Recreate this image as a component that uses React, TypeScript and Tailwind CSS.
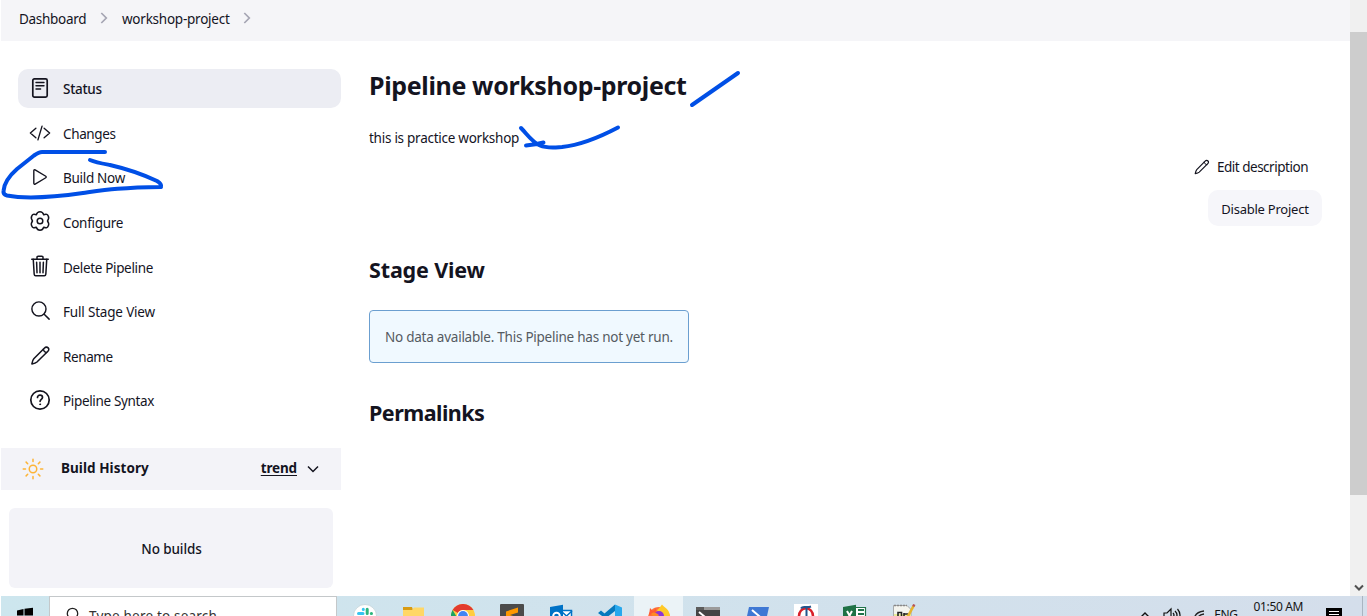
import type { ReactNode } from "react";
import {
  IoCodeSlashOutline,
  IoPlayOutline,
  IoSearchOutline,
  IoSunnyOutline,
  IoTrashOutline,
} from "react-icons/io5";

const DocumentIcon = () => (
  <svg viewBox="0 0 24 24" className="size-6" fill="none" stroke="currentColor" strokeWidth="1.7" strokeLinecap="round">
    <rect x="4.8" y="2.8" width="14.4" height="18.4" rx="1.6" />
    <path strokeWidth="1.4" d="M8 6.5h8M8 9.8h8M8 13h4.6" />
  </svg>
);

const GearIcon = () => (
  <svg viewBox="0 0 24 24" className="size-6" fill="none" stroke="currentColor" strokeWidth="1.5" strokeLinejoin="round">
    <path d="M15.700 5.700C18.500 4.600 19.600 5.400 20.300 7.200C21.300 9 21 9.800 19.500 12C21 14.200 21.300 15 20.300 16.800C19.600 18.600 18.500 19.400 15.700 18.300C14.900 20.800 14 21.300 12 21.300S9.100 20.800 8.300 18.300C5.500 19.400 4.400 18.600 3.700 16.800C2.700 15 3 14.200 4.500 12C3 9.800 2.700 9 3.700 7.200C4.400 5.400 5.500 4.600 8.300 5.700C9.100 3.200 10 2.700 12 2.700S14.900 3.200 15.700 5.700Z" />
    <circle cx="12" cy="12" r="2.800" />
  </svg>
);

const PencilIcon = ({ className }: { className: string }) => (
  <svg viewBox="0 0 24 24" className={className} fill="none" stroke="currentColor" strokeWidth="1.6" strokeLinejoin="round" strokeLinecap="round">
    <path d="M16.2 4.1 5 15.4c-.9 1-1.6 3.2-2 5.4 2.2-.4 4.300-1.100 5.300-2L19.700 7.500c1.100-1.100 1.300-2.500.3-3.500s-2.700-1-3.800.1Z" />
    <path strokeWidth="1.300" d="M15 5.400c.2 2 1.500 3.300 3.500 3.500" />
  </svg>
);

const HelpIcon = () => (
  <svg viewBox="0 0 24 24" className="size-6" fill="none" stroke="currentColor" strokeWidth="1.7" strokeLinecap="round">
    <circle cx="12" cy="12" r="9.2" />
    <path d="M9.500 9.500c0-1.500 1.100-2.300 2.500-2.300s2.500.9 2.500 2.200c0 1.900-2.400 1.900-2.400 3.900" />
    <circle cx="12.100" cy="16.300" r=".5" fill="currentColor" strokeWidth="1" />
  </svg>
);

const Crumb = () => (
  <svg viewBox="0 0 8 12" className="-mt-px h-3 w-2" fill="none" stroke="#a5a5b3" strokeWidth="1.700">
    <path d="m1.300 1 5 5-5 5" />
  </svg>
);

const items: { label: string; icon: ReactNode; cls: string }[] = [
  { label: "Status", icon: <DocumentIcon />, cls: "bg-[#ecedf3] font-medium tracking-[-0.28px]" },
  { label: "Changes", icon: <IoCodeSlashOutline className="mt-px size-[22px]" />, cls: "tracking-[-0.36px]" },
  { label: "Build Now", icon: <IoPlayOutline className="size-[22px]" />, cls: "tracking-[-0.3px]" },
  { label: "Configure", icon: <GearIcon />, cls: "tracking-[-0.3px]" },
  { label: "Delete Pipeline", icon: <IoTrashOutline className="size-6" />, cls: "tracking-[-0.34px]" },
  { label: "Full Stage View", icon: <IoSearchOutline className="size-[23px]" />, cls: "tracking-[-0.18px]" },
  { label: "Rename", icon: <PencilIcon className="size-[23px]" />, cls: "tracking-[-0.4px]" },
  { label: "Pipeline Syntax", icon: <HelpIcon />, cls: "tracking-[-0.34px]" },
];

function Sidebar() {
  return (
    <aside className="w-[340px] shrink-0 pt-7">
      <nav className="flex flex-col gap-[5.650px] pl-[17px]">
        {items.map((it) => (
          <a key={it.label} className={`flex h-[39px] items-center gap-[11px] rounded-[10px] pl-[10px] ${it.cls}`}>
            <span className="-mt-[2px] flex size-6 items-center justify-center">{it.icon}</span>
            <span className="mt-px leading-5">{it.label}</span>
          </a>
        ))}
      </nav>
      <div className="mt-[27.450px] flex h-[42px] items-center bg-[#f3f3f8] pr-[22px] pl-5 font-bold">
        <IoSunnyOutline className="size-6 text-[#fdb436]" />
        <span className="-mt-[2px] ml-4 tracking-[0.06px]">Build History</span>
        <a className="-mt-[2px] ml-auto tracking-[-0.15px] underline underline-offset-2">trend</a>
        <svg viewBox="0 0 12 8" className="ml-[10px] h-2 w-3" fill="none" stroke="currentColor" strokeWidth="1.500">
          <path d="m1 1.500 5 5 5-5" />
        </svg>
      </div>
      <div className="mt-[18px] mr-2 ml-2 flex h-20 items-center justify-center rounded-md bg-[#f3f3f8] font-medium tracking-[-0.1px]">
        <span className="mt-[2px] ml-px">No builds</span>
      </div>
    </aside>
  );
}

function Main() {
  return (
    <main className="flex min-w-0 flex-1 flex-col items-start pl-7">
      <h1 className="mt-[27px] text-[25px] leading-[34px] font-bold tracking-[-0.360px]">Pipeline workshop-project</h1>
      <p className="mt-[26px] leading-5 tracking-[-0.260px]">this is practice workshop</p>
      <div className="mt-[9px] mr-7 flex flex-col items-end self-end">
        <a className="mr-[14px] flex h-5 items-center gap-[6px] tracking-[-0.48px]">
          <PencilIcon className="size-[18px]" />
          <span className="mt-px">Edit description</span>
        </a>
        <button className="mt-[13px] h-[36px] w-[114px] rounded-[10px] bg-[#f6f6fa] pt-[3px] text-[13px] tracking-[-0.240px]">Disable Project</button>
      </div>
      <h2 className="mt-[29px] text-[21.500px] leading-[30px] font-bold tracking-[-0.150px]">Stage View</h2>
      <div className="mt-[25px] flex h-[53px] w-[320px] items-center rounded border border-[#6b9fd0] bg-[#f0f9ff] pt-[2px] pl-[15px] tracking-[-0.240px] whitespace-nowrap text-[#555b62]">
        No data available. This Pipeline has not yet run.
      </div>
      <h2 className="mt-[35px] text-[21.500px] leading-[30px] font-bold tracking-[-0.520px]">Permalinks</h2>
    </main>
  );
}

const AppIcon = ({ children, active }: { children: ReactNode; active?: boolean }) => (
  <div className={`flex h-10 w-[49px] shrink-0 justify-center pt-2 ${active ? "bg-[#ebf3f7]" : ""}`}>
    <svg viewBox="0 0 24 24" className="size-6">{children}</svg>
  </div>
);

function Taskbar() {
  return (
    <footer className="ml-px flex h-5 shrink-0 items-start overflow-hidden bg-linear-to-r from-[#cde6ee] to-[#d4deeb]">
      <div className="flex h-10 w-12 shrink-0 justify-center pt-[11px]">
        <svg viewBox="0 0 18 18" className="size-[18px]">
          <path d="M1 3.500 7.500 2v6.500H1zM8.500 1.800 17 .8v7.700H8.500zM1 9.500h6.500V16L1 15zM8.500 9.500H17V17l-8.500-1z" />
        </svg>
      </div>
      <div className="flex h-10 w-[288px] shrink-0 gap-[11px] border border-[#c4c8ca] bg-white pl-4 text-[13.500px] text-[#333]">
        <svg viewBox="0 0 16 18" className="mt-[10px] h-[18px] w-4 shrink-0" fill="none" stroke="#222" strokeWidth="1.300">
          <circle cx="6.500" cy="6.500" r="5.200" />
          <path d="m3.500 11-3 4" />
        </svg>
        <span className="mt-[9px] -ml-[4px] leading-5 tracking-[0.2px]">Type here to search</span>
      </div>
      <div className="ml-[3px] flex">
        <AppIcon>
          <circle cx="12" cy="12" r="11.500" fill="#fff" stroke="#b7c9cf" strokeWidth=".6" />
          <path stroke="#36c5f0" strokeWidth="3" strokeLinecap="round" d="M5.500 9.500h4.500M10.300 5.300v.3" />
          <path stroke="#2eb67d" strokeWidth="3" strokeLinecap="round" d="M14.200 5.300v4.200M18.300 9.500h.2" />
          <path stroke="#e01e5a" strokeWidth="3" strokeLinecap="round" d="M10 14v4" />
          <path stroke="#ecb22e" strokeWidth="3" strokeLinecap="round" d="M14 14h4" />
        </AppIcon>
        <AppIcon>
          <path fill="#d99b12" d="M1 3h9l1 3H1z" />
          <path fill="#ffd766" d="M1 6h9l2-2.500h10V21H1z" />
        </AppIcon>
        <AppIcon>
          <circle cx="12" cy="12" r="12" fill="#ffcd40" />
          <path fill="#e33b2e" d="M1.600 6A12 12 0 0 1 22.400 6H12a6 6 0 0 0-5 3z" />
          <path fill="#1da362" d="M1.600 6 7 15l5 3-2 6A12 12 0 0 1 1.600 6" />
          <circle cx="12" cy="12" r="6" fill="#fff" />
          <circle cx="12" cy="12" r="4.900" fill="#4285f4" />
        </AppIcon>
        <AppIcon>
          <rect width="24" height="24" rx="1" fill="#4b4b4b" />
          <path fill="#ff9800" d="m6 7.500 12-4v5L10 11l8 2.500v5l-12 3v-4.500l7-2.500-7-2.500z" />
        </AppIcon>
        <AppIcon>
          <path fill="#fff" stroke="#0072c6" strokeWidth="1.500" d="M12 6.500h10.500V19H12z" />
          <path fill="none" stroke="#0072c6" strokeWidth="1.500" d="m12 7 5.500 5L23 7" />
          <path fill="#0072c6" d="M1 3 14 .8v22.400L1 21z" />
          <circle cx="7.500" cy="12" r="3.300" fill="none" stroke="#fff" strokeWidth="2" />
        </AppIcon>
        <AppIcon>
          <path fill="#0879bd" d="m0 9 3-2.500L19 20v3zM0 15 17 .5V7L3 18z" />
          <path fill="#28a8ed" d="m17 .5 7 3v17l-7 3z" />
        </AppIcon>
        <AppIcon active>
          <circle cx="12" cy="14" r="11" fill="#ff7139" />
          <path fill="#ffc928" d="M10 6c2-1 3-3 5-5.500 2 3 7 4 8 11v5L13 12z" />
          <path fill="#ff5a36" d="M2 11 3 4l3 3 3-3v5z" />
          <circle cx="12" cy="12" r="5" fill="#8c35d6" />
          <path fill="#ff8a25" d="M4 10c3-3 5-1 8 1l-3 4z" />
        </AppIcon>
        <AppIcon>
          <path fill="#444" d="M0 3h24v20H0z" />
          <path fill="#9b9b9b" d="M0 3h24v3H0z" />
          <path fill="#5c5c5c" d="M0 3h8v3H0z" />
          <path stroke="#fff" strokeWidth="2" fill="none" d="m3 8 6 5-6 5" />
        </AppIcon>
        <AppIcon>
          <path fill="#3f78d4" d="M4 3h20l-4 18H0z" />
          <path stroke="#fff" strokeWidth="2" fill="none" d="m7 6 7 6-9 6" />
        </AppIcon>
        <AppIcon>
          <path fill="#fff" d="M0 0h24v24H0z" />
          <ellipse cx="12" cy="12" rx="7" ry="7.800" fill="none" stroke="#d8202a" strokeWidth="2.500" />
          <path stroke="#23558c" strokeWidth="2" fill="none" d="M7 4.500c2-3.500 5 0 10-2M12.500 3v17" />
        </AppIcon>
        <AppIcon>
          <path fill="#fff" stroke="#21734a" strokeWidth="1.200" d="M12 3.500h10.500V20H12z" />
          <path stroke="#21734a" strokeWidth="2" d="M15 6h6M15 10h6M15 14h6" />
          <path fill="#1f7246" d="M0 3 13 .8v22.400L0 21z" />
          <path stroke="#fff" strokeWidth="2" d="m4 7 5 9M9 7l-5 9" />
        </AppIcon>
        <AppIcon>
          <path fill="#f4f4ee" stroke="#999" strokeWidth=".8" d="M1.500 1.500H15l4 4V22H1.500z" />
          <path fill="#e9ec9a" d="M2 10h17v6H2z" />
          <path stroke="#888" strokeDasharray="2 1" strokeWidth="1.300" d="M2 1.500h13" />
          <path stroke="#222" strokeWidth="1.600" fill="none" d="M6 16V8.500h3.500V16M12 9v7m0-6h4" />
          <path stroke="#e6b52e" strokeWidth="2.600" d="m21.500 2-7 13" />
          <path stroke="#b6545a" strokeWidth="2.600" d="m22.300.5-1 2" />
        </AppIcon>
      </div>
      <div className="ml-auto flex h-10 text-[12px] leading-4 text-[#151515]">
        <svg viewBox="0 0 10 8" className="mt-[15px] mr-[13px] h-2 w-[10px]" fill="none" stroke="#111" strokeWidth="1.400">
          <path d="m1 6 4-4 4 4" />
        </svg>
        <svg viewBox="0 0 18 16" className="mt-[11px] mr-[11px] h-4 w-[18px]" fill="none" stroke="#111" strokeWidth="1.200">
          <path d="M1 6h3l4-4v12l-4-4H1zM10 6q2 2 0 4M12 4q4 4 0 8M14.500 2q5 6 0 12" />
        </svg>
        <svg viewBox="0 0 14 14" className="mt-[13px] mr-[8px] size-[14px]" fill="none" stroke="#222" strokeWidth="1.300">
          <path d="M2 12Q2 3 12 2M5 12Q5 6 12 5M8 12Q8 9 12 8" />
        </svg>
        <span className="mt-[11px] mr-[17px] tracking-[-0.4px]">ENG</span>
        <span className="mt-[3px] mr-[23px] -ml-px tracking-[-0.360px] whitespace-nowrap">01:50 AM</span>
        <svg viewBox="0 0 20 18" className="mt-3 mr-[16px] h-[18px] w-5">
          <path d="M0 0h16v14H6l-3 3v-3H0z" />
          <path stroke="#fff" strokeWidth="1.200" d="M3 3.500h10M3 6.500h10M3 9.500h10" />
        </svg>
        <span className="mr-[4px] h-10 w-px bg-[#a9b5c1]" />
      </div>
    </footer>
  );
}

const Ink = () => (
  <svg viewBox="0 0 760 210" className="pointer-events-none absolute top-0 left-0 h-[210px] w-[760px]" fill="none" stroke="#004fe6" strokeWidth="4" strokeLinecap="round" strokeLinejoin="round">
    <path d="M105 152H42Q39 152 34 155.500L17 169C9 176 4 184 3.500 191Q3 194.500 7 195.500C25 199 55 197 83 193C105 190 120 187.500 161 187Q162 184 157 181C140 173 123 168 110 165C102 163.500 96 162.500 90 160" />
    <path d="m692 105 46-32" />
    <path d="M521 128C527 134 532 142 540 145.500C547 148.500 554 147.500 562 147C581 145 600 137 618 127.500M526 145.500q10-1 17.500-3" />
  </svg>
);

export default function App() {
  return (
    <div className="relative flex h-[616px] w-[1367px] flex-col overflow-hidden bg-white font-['Noto_Sans',sans-serif] text-[13.500px] text-[#14141f]">
      <div className="flex h-[596px] shrink-0">
        <div className="ml-px flex min-w-0 flex-1 flex-col">
          <header className="flex h-[41px] shrink-0 items-center bg-[#f5f5f8] pb-[4px] pl-[18px] tracking-[-0.3px]">
            <span className="mt-[2px] w-[81px]">Dashboard</span>
            <Crumb />
            <span className="mt-[2px] ml-[14px] w-[121px] tracking-[-0.240px]">workshop-project</span>
            <Crumb />
          </header>
          <div className="flex flex-1">
            <Sidebar />
            <Main />
          </div>
        </div>
        <div className="flex w-[17px] flex-col bg-[#f0f0f0]">
          <div className="mt-8 h-[463px] bg-[#cdcdcd]" />
          <svg viewBox="0 0 10 8" className="mt-auto mb-[4px] ml-[4px] h-2 w-[10px]" fill="none" stroke="#505050" strokeWidth="2">
            <path d="m1 1.500 4 4 4-4" />
          </svg>
        </div>
      </div>
      <Taskbar />
      <Ink />
    </div>
  );
}
